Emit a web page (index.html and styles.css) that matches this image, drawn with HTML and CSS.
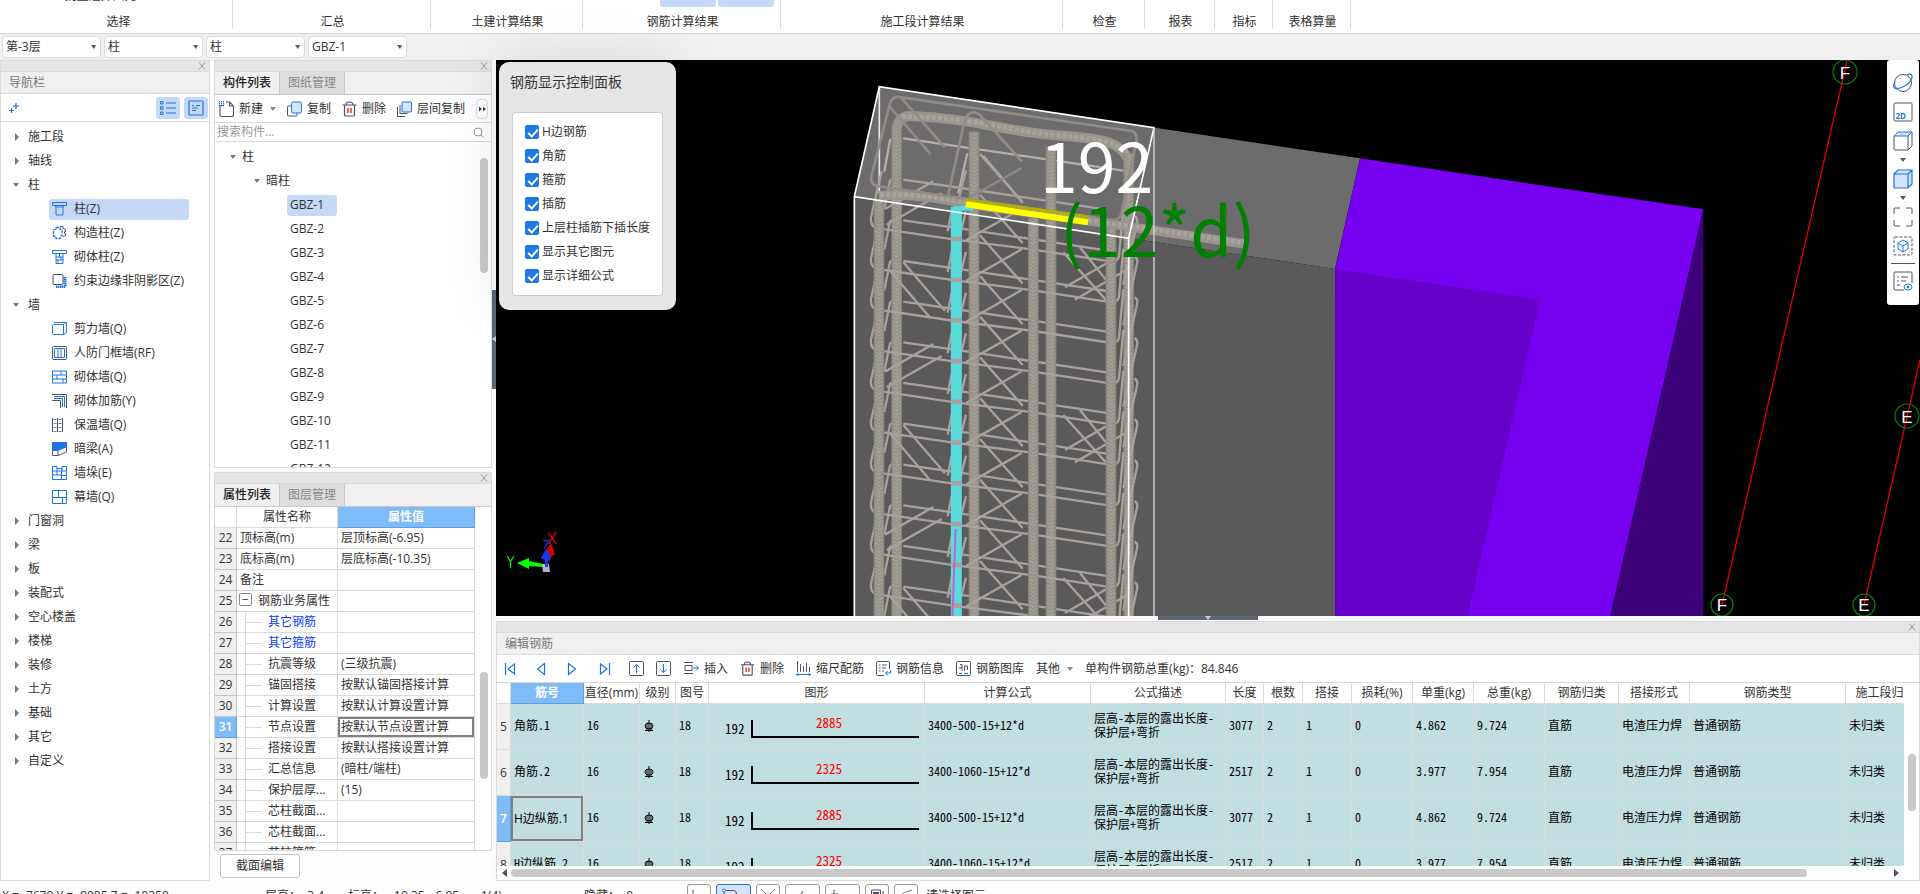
FILE: index.html
```html
<!DOCTYPE html>
<html lang="zh-CN">
<head>
<meta charset="utf-8">
<title>编辑钢筋</title>
<link rel="stylesheet" href="styles.css">
</head>
<body>
<svg class="defs" aria-hidden="true">
  <defs>
    <symbol id="i-close" viewBox="0 0 8 8"><path d="M1 0.5L7 7.5M7 0.5L1 7.5" stroke="#9a9a9a" fill="none"/></symbol>
    <symbol id="i-copy" viewBox="0 0 15 16"><path d="M4.500 5H1.500Q.5 5 .5 6V14Q.5 15 1.500 15H9Q10 15 10 14V12" fill="none" stroke="#4a5568"/><rect x="4.500" y="1" width="10" height="11" rx="1.500" fill="#d3e5fb" stroke="#1f74e4"/></symbol>
    <symbol id="i-trash" viewBox="0 0 15 16"><path d="M.5 4H14.500M4 4Q4 1 7.500 1T11 4M2.500 4V14Q2.500 15 3.500 15H11.500Q12.500 15 12.500 14V4" fill="none" stroke="#4a5568" stroke-width="1.200"/><path d="M6 7V12M9 7V12" stroke="#d80000" stroke-width="1.200"/></symbol>
    <pattern id="rib" width="32" height="22" patternUnits="userSpaceOnUse">
      <rect width="32" height="22" fill="#98948b"/>
      <path d="M4 4L16 12L28 4M4 15L16 23L28 15M4 -7L16 1L28 -7" stroke="#a5a299" stroke-width="4" fill="none"/>
      <path d="M5 10L13 15M27 10L19 15M5 21L13 26M27 21L19 26M5 -1L13 4M27 -1L19 4" stroke="#86837a" stroke-width="2" fill="none"/>
      <path d="M0 0V22M32 0V22" stroke="#807a70" stroke-width="7" opacity=".6"/>
    </pattern>
    <g id="back" fill="none" stroke="#aaa19d" stroke-width="7">
      <path d="M190 877L385 905L800 967M133 965L150 880L160 872M420 800L548 945M378 850L358 930"/>
    </g>
    <g id="front" fill="none" stroke="#aaa19d" stroke-width="7">
      <path d="M125 730L93 868Q90 898 115 901L345 935L580 965L815 1001Q838 1002 838 975L850 840M884 864Q896 870 890 890L850 1070M545 842L378 937M323 910L335 850"/>
    </g>
    <path id="cross-a" d="M190 1125L315 1270M150 1150L268 1288M670 1095L800 1240M720 1080L800 1180M800 1128L675 1200M855 1150L705 1237" fill="none" stroke="#aaa19d" stroke-width="7"/>
    <path id="cross-b" d="M280 882L135 965M305 918L140 1012" fill="none" stroke="#aaa19d" stroke-width="7"/>
  </defs>
</svg>
<div class="app">
  <header class="ribbon">
    <section class="group g1"><div class="cut">批量选择图元</div><h2>选择</h2></section>
    <section class="group g2"><h2>汇总</h2></section>
    <section class="group g3"><h2>土建计算结果</h2></section>
    <section class="group g4"><div class="pills"><i></i><i></i></div><h2>钢筋计算结果</h2></section>
    <section class="group g5"><h2>施工段计算结果</h2></section>
    <section class="group g6"><h2>检查</h2></section>
    <section class="group g7"><h2>报表</h2></section>
    <section class="group g8"><h2>指标</h2></section>
    <section class="group g9"><h2>表格算量</h2></section>
  </header>
  <div class="filters">
    <span class="drop"><select aria-label="楼层"><option>第-3层</option></select></span>
    <span class="drop"><select aria-label="构件大类"><option>柱</option></select></span>
    <span class="drop"><select aria-label="构件类型"><option>柱</option></select></span>
    <span class="drop"><select aria-label="构件"><option>GBZ-1</option></select></span>
  </div>
  <main class="main">
    <aside class="panel nav">
      <div class="strip"><button aria-label="关闭"><svg><use href="#i-close"/></svg></button></div>
      <h3 class="title">导航栏</h3>
      <div class="navbar">
        <button class="plus" aria-label="添加"><svg viewBox="0 0 10 12"><path d="M7 1V7M4 4H10M2.500 6V11M0 8.500H5" stroke="#1f74e4" fill="none" stroke-width="1.200"/></svg></button>
        <button class="tog" aria-label="列表"><svg viewBox="0 0 16 14"><path d="M.5 .5h2.500v2.500h-2.500zM.5 5.700h2.500v2.500h-2.500zM.5 11h2.500v2.500h-2.500zM6 2H16M6 7H16M6 12H16" stroke="#1f74e4" fill="none"/></svg></button>
        <button class="tog" aria-label="详情"><svg viewBox="0 0 16 16"><path d="M2 1H14Q15 1 15 2V14Q15 15 14 15H2Q1 15 1 14V2Q1 1 2 1zM4 5.500H6M8 5.500H12M4 8H10M4 10.500H8" stroke="#1f74e4" fill="none" stroke-width="1.200"/></svg></button>
      </div>
      <ul class="tree">
        <li class="shut">施工段</li><li class="shut">轴线</li><li class="open">柱</li>
        <li class="leaf"><button class="on"><svg viewBox="0 0 15 14"><path d="M.5 .5h14v3h-2l-1.500 1.500v8h-7v-8L2.500 3.500h-2zM2.500 3.500h10M4 5h7" stroke="#1f74e4" fill="none"/></svg>柱(Z)</button></li>
        <li class="leaf"><button><svg viewBox="0 0 15 14"><path d="M4 1.500h4v2l2 1v5l-2 1v2H4v-2L1.500 10V4L4 3z" stroke="#1f74e4" fill="none" stroke-dasharray="3 1" stroke-width="1.300"/><path d="M8 .5h3v2l2.500 1v2h-1v2h1v2L11 10.500" stroke="#4a5568" fill="none"/></svg>构造柱(Z)</button></li>
        <li class="leaf"><button><svg viewBox="0 0 15 14"><path d="M.5 .5h14v3H.5zM4 3.500V13.500H11V3.500M4 7H11M4 10H11M7.500 4V7M9 7V10M6 10V13" stroke="#1f74e4" fill="none"/></svg>砌体柱(Z)</button></li>
        <li class="leaf"><button><svg viewBox="0 0 15 14"><path d="M13 3v10H4" stroke="#1f74e4" stroke-width="3" stroke-dasharray="1.500 .5" fill="none"/><rect x="1" y=".5" width="10" height="10" rx="1" stroke="#4a5568" fill="#fff"/></svg>约束边缘非阴影区(Z)</button></li>
        <li class="open">墙</li>
        <li class="leaf"><button><svg viewBox="0 0 15 14"><path d="M.5 3.500Q.5 2.500 1.500 2.500H11.500V12.500H1.500Q.5 12.500 .5 11.500zM2 .5H14.500V10.500L12 12.500M12 2.500L14 .5" stroke="#1f74e4" fill="none"/></svg>剪力墙(Q)</button></li>
        <li class="leaf"><button><svg viewBox="0 0 15 14"><rect x=".5" y=".5" width="14" height="13" rx="1" stroke="#4a5568" fill="none"/><path d="M2.500 2.500h10v9h-10zM6 2.500V11.500M9 2.500V11.500" stroke="#1f74e4" fill="none"/></svg>人防门框墙(RF)</button></li>
        <li class="leaf"><button><svg viewBox="0 0 15 14"><path d="M.5 1h14v12H.5zM.5 5h14M.5 9h14M9 1V5M5 5V9M11 9V13" stroke="#1f74e4" fill="none"/></svg>砌体墙(Q)</button></li>
        <li class="leaf"><button><svg viewBox="0 0 15 14"><path d="M0 .5H14.500V14M0 6.500H8.500V14" stroke="#4a5568" fill="none"/><path d="M2 2.500H12.500V13M2 4.500H10.500V13" stroke="#1f74e4" fill="none"/></svg>砌体加筋(Y)</button></li>
        <li class="leaf"><button><svg viewBox="0 0 15 14"><path d="M.5 0V14M5.500 0V14M10.500 0V14" stroke="#4a5568"/><path d="M3 1V14M8 1V14" stroke="#4a5568" stroke-width="3" stroke-dasharray="1 3" opacity=".7"/></svg>保温墙(Q)</button></li>
        <li class="leaf"><button><svg viewBox="0 0 15 14"><path d="M0 0H15V5L6 9H0z" fill="#1f74e4"/><path d="M.5 9V13.500H6L14.500 10V5M6 9V13" stroke="#4a5568" fill="none"/></svg>暗梁(A)</button></li>
        <li class="leaf"><button><svg viewBox="0 0 15 14"><path d="M.5 .5H5v2h5v-2h4.500v13H.5zM.5 5h14M.5 9h9M5 2V9M10 2V5M9.500 5V13.500M9.500 9.500h5" stroke="#1f74e4" fill="none"/></svg>墙垛(E)</button></li>
        <li class="leaf"><button><svg viewBox="0 0 15 14"><path d="M.5 .5h14v13H.5zM.5 7.500h14M6.500 .5V7.500M10.500 7.500V13.500" stroke="#1f74e4" fill="none"/></svg>幕墙(Q)</button></li>
        <li class="shut">门窗洞</li><li class="shut">梁</li><li class="shut">板</li><li class="shut">装配式</li><li class="shut">空心楼盖</li><li class="shut">楼梯</li><li class="shut">装修</li><li class="shut">土方</li><li class="shut">基础</li><li class="shut">其它</li><li class="shut">自定义</li>
      </ul>
    </aside>

    <div class="mid">
      <section class="panel comps">
        <div class="strip"><button aria-label="关闭"><svg><use href="#i-close"/></svg></button></div>
        <div class="tabs"><button class="cur">构件列表</button><button>图纸管理</button></div>
        <div class="tools">
          <button><svg viewBox="0 0 15 16"><path d="M5 4.500H1V14Q1 15.500 2.500 15.500H13Q14.500 15.500 14.500 14V5L10.500 1H7M10.500 1V5H14.500" fill="none" stroke="#4a5568" stroke-width="1.100"/><path d="M0 .5h5M0 2.500h5M0 4.500h5" stroke="#1f74e4" stroke-dasharray="1 1" stroke-width="1.500"/></svg>新建<i class="tri"></i></button>
          <button><svg><use href="#i-copy"/></svg>复制</button>
          <button><svg><use href="#i-trash"/></svg>删除</button>
          <button><svg viewBox="0 0 15 16"><path d="M3 4V12.500H10.500M.5 6V15.500H8" fill="none" stroke="#4a5568"/><rect x="5" y="1" width="9.500" height="10" rx="1" fill="#d3e5fb" stroke="#1f74e4"/></svg>层间复制</button>
          <button class="more" aria-label="更多"><svg viewBox="0 0 7 6"><path d="M0 .5L3 3L0 5.500zM4 .5L7 3L4 5.500z" fill="#3b4252"/></svg></button>
        </div>
        <div class="search"><input type="text" placeholder="搜索构件..." aria-label="搜索构件"><svg viewBox="0 0 11 11"><circle cx="5" cy="5" r="4" stroke="#999" fill="none"/><path d="M8 8L10.500 10.500" stroke="#999"/></svg></div>
        <div class="listbox">
          <ul class="ctree">
            <li class="l1">柱</li><li class="l2">暗柱</li>
            <li><button class="on">GBZ-1</button></li><li><button>GBZ-2</button></li><li><button>GBZ-3</button></li><li><button>GBZ-4</button></li><li><button>GBZ-5</button></li><li><button>GBZ-6</button></li><li><button>GBZ-7</button></li><li><button>GBZ-8</button></li><li><button>GBZ-9</button></li><li><button>GBZ-10</button></li><li><button>GBZ-11</button></li><li><button>GBZ-12</button></li>
          </ul>
          <div class="vbar b1"><i></i></div>
        </div>
      </section>
      <section class="props">
        <div class="panel pbox">
          <div class="strip"><button aria-label="关闭"><svg><use href="#i-close"/></svg></button></div>
          <div class="tabs"><button class="cur">属性列表</button><button>图层管理</button></div>
          <div class="listbox">
            <table class="ptable">
              <colgroup><col class="p0"><col class="p1"><col class="p2"></colgroup>
              <thead><tr><th></th><th>属性名称</th><th class="hot">属性值</th></tr></thead>
              <tbody>
                <tr><th>22</th><td>顶标高(m)</td><td>层顶标高(-6.95)</td></tr>
                <tr><th>23</th><td>底标高(m)</td><td>层底标高(-10.35)</td></tr>
                <tr><th>24</th><td>备注</td><td></td></tr>
                <tr><th>25</th><td class="par"><button aria-label="折叠">−</button>钢筋业务属性</td><td></td></tr>
                <tr><th>26</th><td class="sub"><a href="#">其它钢筋</a></td><td></td></tr>
                <tr><th>27</th><td class="sub"><a href="#">其它箍筋</a></td><td></td></tr>
                <tr><th>28</th><td class="sub">抗震等级</td><td>(三级抗震)</td></tr>
                <tr><th>29</th><td class="sub">锚固搭接</td><td>按默认锚固搭接计算</td></tr>
                <tr><th>30</th><td class="sub">计算设置</td><td>按默认计算设置计算</td></tr>
                <tr><th class="hot">31</th><td class="sub">节点设置</td><td class="sel">按默认节点设置计算</td></tr>
                <tr><th>32</th><td class="sub">搭接设置</td><td>按默认搭接设置计算</td></tr>
                <tr><th>33</th><td class="sub">汇总信息</td><td>(暗柱/端柱)</td></tr>
                <tr><th>34</th><td class="sub">保护层厚...</td><td>(15)</td></tr>
                <tr><th>35</th><td class="sub">芯柱截面...</td><td></td></tr>
                <tr><th>36</th><td class="sub">芯柱截面...</td><td></td></tr>
                <tr><th>37</th><td class="sub">芯柱箍筋</td><td></td></tr>
              </tbody>
            </table>
            <div class="vbar b2"><i></i></div>
          </div>
        </div>
        <div class="foot"><button>截面编辑</button></div>
      </section>
    </div>

    <div class="vsplit"><i></i></div>

    <div class="work">
      <div class="canvas">
        <svg class="scene" viewBox="496 60 1424 557" preserveAspectRatio="xMinYMin slice">
          <rect x="496" y="60" width="1424" height="557" fill="#000"/>
          <path d="M879.300 86.700L1360 158.300L1335 269L1128.700 238.300L854.300 196.700z" fill="#6c6c6c"/>
          <path d="M854.300 196.700L1128.700 238.300L1335.200 269V617H854.300z" fill="#5a5a5a"/>
          <path d="M1360 158.300L1703.300 209.300L1610 617H1335.200V269z" fill="#7800f0"/>
          <path d="M1335.200 269L1540 299.700L1467.400 617H1335.200z" fill="#6400c8"/>
          <path d="M1703.300 209.300V617H1610z" fill="#3c0078"/>
          <g transform="translate(840 50) scale(.3333)">
            <path d="M118 110V430" stroke="#e8e8e8" stroke-width="5"/>
            <path d="M190 265L850 362M133 365L150 270L185 262M430 318L548 458M382 310L355 430" fill="none" stroke="#b5aeab" stroke-width="7"/>
            <use href="#back" y="-488"/><use href="#back" y="-366"/><use href="#back" y="-244"/><use href="#back" y="-122"/><use href="#back"/><use href="#back" y="122"/><use href="#back" y="244"/><use href="#back" y="367"/><use href="#back" y="489"/><use href="#back" y="611"/><use href="#back" y="733"/>
            <path d="M170 250Q170 195 215 198C400 205 500 245 640 255S840 270 865 330" fill="none" stroke="#99958c" stroke-width="30"/>
            <path d="M185 200C400 200 520 245 640 255S820 268 860 310" fill="none" stroke="#a7a49b" stroke-width="14" stroke-dasharray="12 6"/>
            <g transform="translate(154 225)"><rect width="32" height="1480" fill="url(#rib)"/></g>
            <g transform="translate(386 245)"><rect width="32" height="1460" fill="url(#rib)"/></g>
            <g transform="translate(617 290)"><rect width="32" height="1410" fill="url(#rib)"/></g>
            <g transform="translate(850 310)"><rect width="32" height="1390" fill="url(#rib)"/></g>
            <use href="#front" y="-366"/><use href="#front" y="-244"/><use href="#front" y="-122"/><use href="#front"/><use href="#front" y="122"/><use href="#front" y="244"/><use href="#front" y="367"/><use href="#front" y="489"/><use href="#front" y="611"/><use href="#front" y="733"/>
            <path d="M545 354L385 445" stroke="#8f8783" stroke-width="7"/>
            <use href="#cross-a" y="-488"/><use href="#cross-a"/><use href="#cross-a" y="489"/>
            <use href="#cross-b" y="-488"/><use href="#cross-b"/><use href="#cross-b" y="489"/>
            <path d="M117 436C250 432 320 450 400 465L800 520L1212 582" fill="none" stroke="#99958c" stroke-width="28"/>
            <path d="M120 434C250 430 320 448 400 463L800 518L1210 578" fill="none" stroke="#a7a49b" stroke-width="14" stroke-dasharray="12 6"/>
            <path d="M1212 566V598" stroke="#aaa69c" stroke-width="5"/>
            <g transform="translate(101 450)"><rect width="32" height="1260" fill="url(#rib)"/></g>
            <g transform="translate(564 505)"><rect width="32" height="1200" fill="url(#rib)"/></g>
            <g transform="translate(797 535)"><rect width="32" height="1170" fill="url(#rib)"/></g>
            <path d="M150 160Q158 135 185 142L875 243Q895 250 888 280L845 490Q838 512 815 510L110 408Q88 400 95 375zM185 145L315 292M145 165L272 313M325 435L375 205Q395 175 420 195L546 334" fill="none" stroke="#958b86" stroke-width="8"/>
            <path d="M349 470V1705" stroke="#59dadb" stroke-width="33"/>
            <path d="M340 475H400" stroke="#59dadb" stroke-width="14"/>
            <path d="M349 560V1705" stroke="#aaa19d" stroke-width="30" stroke-dasharray="14 108.200"/>
            <path d="M347 1437L337 1705" stroke="#c85fd0" stroke-width="6"/>
            <path d="M378 450L746 500" stroke="#b8b000" stroke-width="9"/>
            <path d="M378 463L744 517" stroke="#ff0" stroke-width="18"/>
            <path d="M43 1705V440L118 110L942 233L866 565L43 440M866 565V1705M942 233L866 565" fill="none" stroke="#fff" stroke-width="5"/>
            <path d="M942 233V1705" stroke="#dcdcdc" stroke-width="4"/>
          </g>
          <text class="big" x="1040" y="193" fill="#fff">192</text>
          <text class="big" x="1060" y="257" fill="#008000">(12*d)</text>
          <g stroke="#e00000" stroke-width="1.300"><path d="M1847 61L1722 605M1920 360L1864 605"/></g>
          <g fill="none" stroke="#0a7a0a" stroke-width="1.200"><circle cx="1845" cy="72" r="12"/><circle cx="1907" cy="416" r="12"/><circle cx="1722" cy="605" r="11"/><circle cx="1864" cy="605" r="11"/></g>
          <g class="mark" fill="#fff" text-anchor="middle"><text x="1845" y="79">F</text><text x="1907" y="423">E</text><text x="1722" y="611">F</text><text x="1864" y="611">E</text></g>
          <path d="M517 563L529 558V561L543 564V567L529 566V569z" fill="#0f0"/>
          <path d="M542 564H549L550 572H543z" fill="#b8b8b8"/>
          <path d="M546 550L551 543L555 554L551 557L549 563z" fill="#d00000"/>
          <path d="M546 549L551 558L548 560V567H545V560L541 558z" fill="#1040ff"/>
          <path d="M543 540.500H549L544 549" fill="none" stroke="#1030f0" stroke-width="1.300"/>
          <path d="M549 533L556 544M556 532L549 544" stroke="#f00" stroke-width="1.300"/>
          <path d="M507 556L510.500 561.500L514 556M510.500 561.500V568" fill="none" stroke="#0f0" stroke-width="1.200"/>
        </svg>
        <section class="rebar">
          <h3>钢筋显示控制面板</h3>
          <div class="checks">
            <label><input type="checkbox" checked>H边钢筋</label>
            <label><input type="checkbox" checked>角筋</label>
            <label><input type="checkbox" checked>箍筋</label>
            <label><input type="checkbox" checked>插筋</label>
            <label><input type="checkbox" checked>上层柱插筋下插长度</label>
            <label><input type="checkbox" checked>显示其它图元</label>
            <label><input type="checkbox" checked>显示详细公式</label>
          </div>
        </section>
        <nav class="views">
          <button aria-label="动态观察"><svg viewBox="0 0 20 20"><circle cx="10" cy="10" r="8.500" stroke="#4a5568" fill="none"/><path d="M14 2C18 0 20 2 18.500 6C16 12 6 17 1.500 15Q-.5 13 2 9" stroke="#1f74e4" fill="none" stroke-width="1.200"/></svg></button>
          <button aria-label="2D"><svg viewBox="0 0 20 20"><rect x="1" y="1" width="18" height="18" rx="1" stroke="#4a5568" fill="none"/><text class="two" x="2.500" y="16.500" fill="#1f74e4">2D</text></svg></button>
          <button class="dd" aria-label="线框"><svg viewBox="0 0 20 20"><path d="M1 5L5 1H19L15 5z" fill="#d3e5fb" stroke="#1f74e4"/><path d="M1 5V18Q1 19 2 19H15L19 15V1M15 5V19" stroke="#4a5568" fill="none"/></svg></button>
          <button class="dd" aria-label="实体"><svg viewBox="0 0 20 20"><path d="M1 5L5 1H19V15L15 19H2Q1 19 1 18zM1 5H15M15 5L19 1M15 5V19" fill="#d3e5fb" stroke="#1f74e4" stroke-width="1.200"/></svg></button>
          <button aria-label="全屏"><svg viewBox="0 0 20 20"><path d="M7 1H2Q1 1 1 2V7M13 1H18Q19 1 19 2V7M7 19H2Q1 19 1 18V13M13 19H18Q19 19 19 18V13" stroke="#4a5568" fill="none"/></svg></button>
          <button aria-label="选择显示"><svg viewBox="0 0 20 20"><rect x="1" y="1" width="18" height="18" rx="1" stroke="#4a5568" fill="none" stroke-dasharray="3 1.500"/><path d="M10 4L15 7V13L10 16L5 13V7zM5 7L10 10L15 7M10 10V16" stroke="#1f74e4" fill="none"/></svg></button>
          <hr>
          <button aria-label="显示设置"><svg viewBox="0 0 20 20"><path d="M11 19H2Q1 19 1 18V2Q1 1 2 1H18Q19 1 19 2V12M4 6H6M8 6H15M4 10H6M8 10H13M4 14H7" stroke="#4a5568" fill="none"/><ellipse cx="15" cy="16" rx="4" ry="3" stroke="#1f74e4" fill="none"/><circle cx="15" cy="16" r="1.300" fill="#1f74e4"/></svg></button>
        </nav>
      </div>
      <div class="hsplit"><i></i></div>
      <section class="panel edit">
        <div class="strip"><button aria-label="关闭"><svg><use href="#i-close"/></svg></button></div>
        <h3 class="title">编辑钢筋</h3>
        <div class="ebar">
          <div class="steps">
            <button aria-label="第一条"><svg viewBox="0 0 16 16"><path d="M3.500 2V14M12.500 3L6 8L12.500 13z" fill="none" stroke="#1f74e4" stroke-width="1.200"/></svg></button>
            <button aria-label="上一条"><svg viewBox="0 0 16 16"><path d="M11.500 2.500L4.500 8L11.500 13.500z" fill="none" stroke="#1f74e4" stroke-width="1.200"/></svg></button>
            <button aria-label="下一条"><svg viewBox="0 0 16 16"><path d="M4.500 2.500L11.500 8L4.500 13.500z" fill="none" stroke="#1f74e4" stroke-width="1.200"/></svg></button>
            <button aria-label="最后一条"><svg viewBox="0 0 16 16"><path d="M14.500 2V14M5.500 3L12 8L5.500 13z" fill="none" stroke="#1f74e4" stroke-width="1.200"/></svg></button>
          </div>
          <button aria-label="上移"><svg viewBox="0 0 15 15"><rect x=".5" y=".5" width="14" height="14" rx="1" fill="none" stroke="#4a5568"/><path d="M7.500 12V3.500M4.500 6.500L7.500 3.500L10.500 6.500" fill="none" stroke="#1f74e4"/></svg></button>
          <button aria-label="下移"><svg viewBox="0 0 15 15"><rect x=".5" y=".5" width="14" height="14" rx="1" fill="none" stroke="#4a5568"/><path d="M7.500 3V11.500M4.500 8.500L7.500 11.500L10.500 8.500" fill="none" stroke="#1f74e4"/></svg></button>
          <button><svg viewBox="0 0 15 15"><path d="M0 1.500H9M0 12.500H9M1 4.500H8V9.500H1z" fill="none" stroke="#4a5568"/><path d="M9 7H14.500M12 4.500L14.500 7L12 9.500" fill="none" stroke="#1f74e4"/></svg>插入</button>
          <button><svg><use href="#i-trash"/></svg>删除</button>
          <button><svg viewBox="0 0 15 15"><path d="M1.500 0V11M4.500 3V11M7.500 5V11M10.500 2V11M13.500 6V11" stroke="#4a5568"/><path d="M0 13.500H15M2.500 12L.5 13.500L2.500 15M12.500 12L14.500 13.500L12.500 15" fill="none" stroke="#1f74e4"/></svg>缩尺配筋</button>
          <button><svg viewBox="0 0 15 15"><path d="M8 14.500H1.500Q.5 14.500 .5 13.500V1.500Q.5 .5 1.500 .5H12.500Q13.500 .5 13.500 1.500V8M3 4H4.500M6 4H11M3 7H4.500M6 7H10M3 10H4.500M6 10H8" stroke="#4a5568" fill="none"/><path d="M14.500 9V12H9.500M12 9.500L9.500 12L12 14.500" stroke="#1f74e4" fill="none"/></svg>钢筋信息</button>
          <button><svg viewBox="0 0 15 15"><rect x=".5" y=".5" width="14" height="14" rx="1" fill="none" stroke="#4a5568"/><path d="M3 7H6V3.500H4M6 7V10M8.500 10V5H11.500V9" stroke="#4a5568" fill="none"/><path d="M3 12.500H6M8 12.500H12" stroke="#1f74e4"/></svg>钢筋图库</button>
          <button>其他<i class="tri"></i></button>
          <span>单构件钢筋总重(kg)：84.846</span>
        </div>
        <div class="grid">
          <div class="gclip">
            <table class="gtable">
              <colgroup><col class="c0"><col class="c1"><col class="c2"><col class="c3"><col class="c4"><col class="c5"><col class="c6"><col class="c7"><col class="c8"><col class="c9"><col class="c10"><col class="c11"><col class="c12"><col class="c13"><col class="c14"><col class="c15"><col class="c16"><col class="c17"></colgroup>
              <thead><tr><th></th><th class="hot">筋号</th><th>直径(mm)</th><th>级别</th><th>图号</th><th>图形</th><th>计算公式</th><th>公式描述</th><th>长度</th><th>根数</th><th>搭接</th><th>损耗(%)</th><th>单重(kg)</th><th>总重(kg)</th><th>钢筋归类</th><th>搭接形式</th><th>钢筋类型</th><th>施工段归类</th></tr></thead>
              <tbody>
                <tr><th>5</th><td>角筋.1</td><td>16</td><td><svg class="grade" viewBox="0 0 10 12"><path d="M5 0V12M3 3V10M7 3V10M1 10.500H9" stroke="#000"/><ellipse cx="5" cy="6" rx="4" ry="3" fill="none" stroke="#000"/></svg></td><td>18</td><td class="fig"><svg viewBox="0 0 214 44"><text x="16" y="29">192</text><path d="M43 15V32H210" fill="none" stroke="#000" stroke-width="2"/><text class="len" x="120" y="23">2885</text></svg></td><td>3400-500-15+12*d</td><td>层高-本层的露出长度-<br>保护层+弯折</td><td>3077</td><td>2</td><td>1</td><td>0</td><td>4.862</td><td>9.724</td><td>直筋</td><td>电渣压力焊</td><td>普通钢筋</td><td>未归类</td></tr>
                <tr><th>6</th><td>角筋.2</td><td>16</td><td><svg class="grade" viewBox="0 0 10 12"><path d="M5 0V12M3 3V10M7 3V10M1 10.500H9" stroke="#000"/><ellipse cx="5" cy="6" rx="4" ry="3" fill="none" stroke="#000"/></svg></td><td>18</td><td class="fig"><svg viewBox="0 0 214 44"><text x="16" y="29">192</text><path d="M43 15V32H210" fill="none" stroke="#000" stroke-width="2"/><text class="len" x="120" y="23">2325</text></svg></td><td>3400-1060-15+12*d</td><td>层高-本层的露出长度-<br>保护层+弯折</td><td>2517</td><td>2</td><td>1</td><td>0</td><td>3.977</td><td>7.954</td><td>直筋</td><td>电渣压力焊</td><td>普通钢筋</td><td>未归类</td></tr>
                <tr><th class="hot">7</th><td class="sel">H边纵筋.1</td><td>16</td><td><svg class="grade" viewBox="0 0 10 12"><path d="M5 0V12M3 3V10M7 3V10M1 10.500H9" stroke="#000"/><ellipse cx="5" cy="6" rx="4" ry="3" fill="none" stroke="#000"/></svg></td><td>18</td><td class="fig"><svg viewBox="0 0 214 44"><text x="16" y="29">192</text><path d="M43 15V32H210" fill="none" stroke="#000" stroke-width="2"/><text class="len" x="120" y="23">2885</text></svg></td><td>3400-500-15+12*d</td><td>层高-本层的露出长度-<br>保护层+弯折</td><td>3077</td><td>2</td><td>1</td><td>0</td><td>4.862</td><td>9.724</td><td>直筋</td><td>电渣压力焊</td><td>普通钢筋</td><td>未归类</td></tr>
                <tr><th>8</th><td>H边纵筋.2</td><td>16</td><td><svg class="grade" viewBox="0 0 10 12"><path d="M5 0V12M3 3V10M7 3V10M1 10.500H9" stroke="#000"/><ellipse cx="5" cy="6" rx="4" ry="3" fill="none" stroke="#000"/></svg></td><td>18</td><td class="fig"><svg viewBox="0 0 214 44"><text x="16" y="29">192</text><path d="M43 15V32H210" fill="none" stroke="#000" stroke-width="2"/><text class="len" x="120" y="23">2325</text></svg></td><td>3400-1060-15+12*d</td><td>层高-本层的露出长度-<br>保护层+弯折</td><td>2517</td><td>2</td><td>1</td><td>0</td><td>3.977</td><td>7.954</td><td>直筋</td><td>电渣压力焊</td><td>普通钢筋</td><td>未归类</td></tr>
              </tbody>
            </table>
          </div>
          <div class="vbar b3"><i></i></div>
        </div>
        <div class="hbar"><b class="lt"></b><div class="track"><i></i></div><b class="rt"></b></div>
      </section>
    </div>
  </main>
  <footer class="status">
    <span class="s1">X = -7679 Y = -8085 Z = -10350</span>
    <span class="s2">层高：&nbsp; 3.4</span>
    <span class="s3">标高：&nbsp; -10.35~-6.95</span>
    <span class="s4">1(4)</span>
    <span class="s5">隐藏：&nbsp; 0</span>
    <div class="sbtns">
      <button aria-label="正交"><svg viewBox="0 0 16 16"><path d="M2 2V13H14" stroke="#4a5568" fill="none"/></svg></button>
      <button class="w on" aria-label="捕捉"><svg viewBox="0 0 16 16"><path d="M4 2.500H12Q14.500 2.500 14.500 6V12" stroke="#4a5568" fill="none"/><path d="M2 4V12" stroke="#1f74e4"/><circle cx="2" cy="2.500" r="1.500" stroke="#1f74e4" fill="#fff"/></svg></button>
      <button aria-label="交点"><svg viewBox="0 0 16 16"><path d="M1 1L15 15M15 1L1 15" stroke="#777"/></svg></button>
      <button class="w" aria-label="垂点"><svg viewBox="0 0 16 16"><path d="M12 3L5 13" stroke="#4a5568"/></svg></button>
      <button class="w" aria-label="中点"><svg viewBox="0 0 16 16"><path d="M3 2V12M0 6H7" stroke="#4a5568"/></svg></button>
      <button aria-label="端点"><svg viewBox="0 0 16 16"><path d="M2.500 2H11.500V14H2.500z" fill="#fff" stroke="#4a5568"/><path d="M4 4H10V14H4z" fill="#4a5568"/><path d="M14 3V14" stroke="#4a5568"/></svg></button>
      <button aria-label="延伸"><svg viewBox="0 0 16 16"><path d="M2 10C4 4 8 4 14 2" stroke="#777" fill="none"/></svg></button>
    </div>
    <span>请选择图元</span>
  </footer>
</div>
</body>
</html>
```
FILE: styles.css
```css
* { box-sizing: border-box; }
body { margin: 0; height: 100vh; overflow: hidden; background: #fdfdfd; color: #333; font: 12px/16px "Open Sans", "Noto Sans CJK SC", sans-serif; }
button, input, select { font: inherit; color: inherit; margin: 0; padding: 0; border: 0; background: none; }
h2, h3 { margin: 0; font-size: inherit; font-weight: 400; }
ul { list-style: none; margin: 0; padding: 0; }
.defs { position: absolute; width: 0; height: 0; }
.app { display: flex; flex-direction: column; height: calc(100vh + 17px); }

.ribbon { display: flex; height: 34px; background: #fff; border-bottom: 1px solid #d6d6d6; padding-bottom: 4px; overflow: hidden; }
.group { display: flex; flex-direction: column; align-items: center; justify-content: flex-end; border-right: 1px solid #dcdcdc; padding-left: 2px; }
.group h2 { line-height: 14px; }
.cut { display: flex; align-items: flex-end; height: 3px; margin-bottom: auto; white-space: nowrap; overflow: hidden; line-height: 14px; padding-right: 36px; }
.pills { display: flex; gap: 2px; margin: 0 0 auto 68px; }
.pills i { width: 56px; height: 7px; background: #c4d9f5; border-radius: 0 0 3px 3px; }
.g1 { width: 233px; padding-left: 5px; } .g2 { width: 198px; } .g3 { width: 152px; } .g4 { width: 198px; }
.g5 { width: 282px; } .g6 { width: 82px; } .g7 { width: 70px; } .g8 { width: 58px; } .g9 { width: 78px; }

.filters { display: flex; gap: 3px; padding: 1px 2px; height: 26px; background: #f0f0f0; align-items: center; }
.drop { position: relative; width: 99px; height: 22px; }
.drop select { appearance: none; width: 100%; height: 100%; background: #fff; border: 1px solid #dcdcdc; border-radius: 4px; padding-left: 3px; }
.drop::after { content: ""; position: absolute; right: 5px; top: 9px; border: 2px solid transparent; border-top: 4px solid #555; border-bottom: 0; border-left-width: 3px; pointer-events: none; }

.main { flex: 1; min-height: 0; display: flex; }
.panel { border: 1px solid #dadada; border-top: 0; background: #fff; display: flex; flex-direction: column; min-height: 0; }
.strip { flex: none; height: 12px; background: #e5e5e5; border-top: 1px solid #dadada; border-bottom: 1px solid #dadada; display: flex; justify-content: flex-end; align-items: center; padding-right: 3px; }
.strip button { display: flex; }
.strip svg { width: 8px; height: 8px; }
.title { flex: none; height: 22px; line-height: 21px; background: #f0f0f0; border-bottom: 1px solid #dadada; padding-left: 8px; color: #777; }

.nav { width: 210px; margin-right: 4px; }
.navbar { flex: none; display: flex; align-items: center; gap: 4px; height: 28px; padding: 0 1px 0 8px; border-bottom: 1px solid #dadada; }
.plus { margin-right: auto; display: flex; }
.plus svg { width: 10px; height: 12px; }
.tog { width: 24px; height: 22px; background: #c4d9f5; border-radius: 3px; display: flex; align-items: center; justify-content: center; }
.tog svg { width: 16px; height: 16px; }
.tree { padding-top: 3px; }
.tree li { height: 24px; line-height: 24px; display: flex; align-items: center; }
.tree .shut, .tree .open { padding-left: 14px; gap: 9px; }
.tree .shut::before { content: ""; border: 4px solid transparent; border-left: 4px solid #777; border-right: 0; }
.tree .open { padding-left: 12px; }
.tree .open::before, .l1::before, .l2::before { content: ""; border: 3px solid transparent; border-top: 4px solid #777; border-bottom: 0; }
.tree .leaf { padding-left: 48px; }
.leaf button { display: flex; align-items: center; gap: 7px; height: 21px; min-width: 140px; padding-left: 3px; border-radius: 3px; white-space: nowrap; }
.leaf svg { width: 15px; height: 14px; }
.on { background: #c4d9f5; }

.mid { width: 278px; display: flex; flex-direction: column; gap: 4px; }
.comps { flex: 407 1 0; }
.props { flex: 410 1 0; min-height: 0; display: flex; flex-direction: column; }
.pbox { flex: 1; }
.foot { flex: none; padding: 3px 6px; height: 30px; }
.foot button { width: 80px; height: 24px; background: #fff; border: 1px solid #c4c4c4; border-radius: 3px; }
.tabs { flex: none; display: flex; height: 23px; background: #f0f0f0; border-bottom: 1px solid #c8c8c8; }
.tabs button { width: 65px; border-right: 1px solid #c8c8c8; color: #888; background: #dedede; }
.tabs .cur { color: #222; background: #f0f0f0; font-weight: 500; }
.tools { flex: none; display: flex; align-items: center; gap: 11px; height: 28px; padding-left: 4px; border-bottom: 1px solid #dadada; }
.tools button, .ebar button { display: flex; align-items: center; gap: 5px; white-space: nowrap; }
.tools svg { width: 15px; height: 16px; }
.tri { border: 3px solid transparent; border-top: 4px solid #888; border-bottom: 0; margin-left: 2px; }
.tools .more { width: 12px; height: 20px; border: 1px solid #ddd; border-radius: 4px; justify-content: center; }
.tools .more svg { width: 7px; height: 6px; flex: none; }
.search { flex: none; display: flex; align-items: center; height: 19px; border-bottom: 1px solid #dadada; padding: 0 7px 0 2px; }
.search input { flex: 1; min-width: 0; outline: 0; }
.search input::placeholder { color: #999; }
.search svg { width: 11px; height: 11px; }
.listbox { flex: 1; min-height: 0; display: flex; justify-content: space-between; overflow: hidden; }
.ctree { padding-top: 3px; }
.ctree li { height: 24px; display: flex; align-items: center; gap: 6px; padding-left: 72px; }
.ctree .l1 { padding-left: 15px; }
.ctree .l2 { padding-left: 39px; }
.ctree button { height: 21px; min-width: 50px; padding: 0 3px; text-align: left; border-radius: 3px; }
.vbar { flex: none; width: 14px; padding-left: 3px; }
.vbar i { display: block; width: 8px; border-radius: 4px; background: #c9c9c9; }
.b1 i { margin-top: 16px; height: 115px; }
.b2 i { margin-top: 165px; height: 107px; }
.b3 i { margin-top: 71px; height: 57px; }

table { border-collapse: separate; border-spacing: 0; table-layout: fixed; }
.ptable { width: 260px; flex: none; align-self: flex-start; }
.p0 { width: 22px; } .p1 { width: 101px; } .p2 { width: 137px; }
.ptable th, .ptable td { height: 21px; padding: 0 3px; line-height: 16px; border-right: 1px solid #dadada; border-bottom: 1px solid #dadada; font-weight: 400; white-space: nowrap; overflow: hidden; text-align: left; }
.ptable thead th { text-align: center; }
.ptable tbody th { background: #f0f0f0; text-align: center; padding: 0; border-color: #c4c4c4; }
.ptable .hot, .gtable .hot, .ptable tbody .hot, .gtable tbody .hot { background: #7fbaf9; color: #fff; font-weight: 600; border-color: #5b9fe6; }
.ptable .sel { box-shadow: inset 0 0 0 2px #808080; }
.ptable .par button { width: 13px; height: 13px; line-height: 11px; border: 1px solid #888; border-radius: 2px; margin-right: 6px; vertical-align: 1px; }
.ptable .par { padding-left: 2px; }
.ptable .sub { padding: 0 0 0 31px; background: linear-gradient(#dadada, #dadada) 8px 0 / 1px 100% no-repeat, linear-gradient(#dadada, #dadada) 9px 10px / 16px 1px no-repeat; }
.ptable a { color: #0a3cff; text-decoration: none; }

.vsplit { width: 4px; background: #fafafa; display: flex; align-items: center; }
.vsplit i { width: 4px; height: 99px; background: #5b6676; margin-bottom: 263px; display: flex; align-items: center; }
.vsplit i::before { content: ""; border: 3px solid transparent; border-right: 4px solid #c8ccd2; border-left: 0; }
.work { flex: 1; min-width: 0; display: flex; flex-direction: column; }
.canvas { position: relative; flex: 557 1 0; min-height: 0; background: #000; }
.scene { display: block; width: 100%; height: 100%; }
.big { font: 68px "Noto Sans CJK SC", sans-serif; }
.mark { font: 17px "Liberation Sans", sans-serif; }
.two { font: 700 8px "Open Sans", sans-serif; }
.rebar { position: absolute; z-index: 2; left: 3px; top: 2px; width: 177px; padding: 11px 13px 14px; background: #e6e6e6; border-radius: 10px; box-shadow: 0 0 60px rgba(0,0,0,.1); }
.rebar h3 { font-size: 14px; line-height: 18px; margin: 0 0 21px -2px; }
.checks { background: #fff; border: 1px solid #cfcfcf; border-radius: 3px; padding: 7px 12px; }
.checks label { display: flex; align-items: center; gap: 3px; height: 24px; white-space: nowrap; }
.checks input { appearance: none; flex: none; position: relative; width: 14px; height: 14px; border-radius: 2px; background: #1f78e8; }
.checks input:checked::after { content: ""; position: absolute; left: 5px; top: 2px; width: 4px; height: 8px; border: solid #fff; border-width: 0 2px 2px 0; rotate: 42deg; }
.views { position: absolute; right: 1px; top: 0; width: 32px; padding: 13px 0 14px; background: #fff; border-radius: 3px; display: flex; flex-direction: column; align-items: center; gap: 9px; }
.views button { display: flex; flex-direction: column; align-items: center; }
.views svg { width: 20px; height: 20px; }
.views .dd::after { content: ""; border: 3px solid transparent; border-top: 4px solid #4a5568; border-bottom: 0; margin: 7px 0 -2px; }
.views hr { width: 24px; height: 1px; border: 0; background: #4a5568; margin: -2px 0; }
.hsplit { flex: none; height: 5px; background: #fdfdfd; display: flex; justify-content: center; }
.hsplit i { width: 100px; height: 4px; background: #5b6676; display: flex; justify-content: center; }
.hsplit i::before { content: ""; border: 3px solid transparent; border-top: 4px solid #c8ccd2; border-bottom: 0; }

.edit { flex: 259 1 0; }
.ebar { flex: none; display: flex; align-items: center; gap: 12px; height: 28px; padding-left: 5px; border-bottom: 1px solid #dadada; }
.ebar svg { width: 15px; height: 15px; }
.steps { display: flex; gap: 15px; margin-right: 6px; }
.steps svg { width: 16px; height: 16px; }
.steps + button + button + button { margin-left: 1px; }
.grid { flex: 1; min-height: 0; display: flex; overflow: hidden; }
.gclip { flex: 1; min-width: 0; overflow: hidden; margin-right: 1px; }
.gtable { width: 1429px; }
.c0 { width: 14px; } .c1 { width: 73px; } .c2 { width: 56px; } .c3 { width: 36px; } .c4 { width: 33px; } .c5 { width: 216px; } .c6 { width: 166px; } .c7 { width: 135px; } .c8 { width: 38px; } .c9 { width: 39px; } .c10 { width: 49px; } .c11 { width: 61px; } .c12 { width: 61px; } .c13 { width: 71px; } .c14 { width: 74px; } .c15 { width: 71px; } .c16 { width: 156px; } .c17 { width: 80px; }
.gtable th, .gtable td { border-right: 1px solid #dadada; border-bottom: 1px solid #dadada; font-weight: 400; padding: 0; }
.gtable thead th { height: 21px; line-height: 16px; white-space: nowrap; }
.gtable tbody th { background: #f0f0f0; }
.gtable td { height: 46px; background: #c1dee1; color: #000; padding: 0 0 4px 3px; line-height: 14px; font-family: "Noto Sans Mono CJK SC", "Noto Sans CJK SC", monospace; white-space: nowrap; }
.gtable td.sel { font-family: "Open Sans", "Noto Sans CJK SC", sans-serif; box-shadow: inset 0 0 0 2px #808080; padding-bottom: 0; }
.grade { display: block; width: 10px; height: 12px; margin: 2px 0 0 1px; }
.gtable td.fig { padding: 0; }
.fig svg { display: block; width: 214px; height: 44px; }
.fig text { font-size: 13px; }
.fig .len { fill: #f00; text-anchor: middle; }
.hbar { flex: none; height: 14px; display: flex; align-items: center; gap: 4px; padding: 0 20px 0 5px; }
.hbar b { border: 4px solid transparent; }
.hbar .lt { border-right: 5px solid #4a5568; border-left: 0; }
.hbar .rt { border-left: 5px solid #4a5568; border-right: 0; }
.track { flex: 1; }
.track i { display: block; width: 94%; height: 8px; border-radius: 4px; background: #c9c9c9; }

.status { flex: none; height: 30px; display: flex; align-items: center; padding: 0 2px; white-space: nowrap; }
.s1 { width: 263px; } .s2 { width: 83px; } .s3 { width: 133px; } .s4 { width: 103px; } .s5 { width: 103px; }
.sbtns { display: flex; gap: 5px; margin-right: 8px; }
.sbtns button { width: 24px; height: 24px; border: 1px solid #999; border-radius: 3px; display: flex; align-items: center; justify-content: center; }
.sbtns .w { width: 35px; justify-content: flex-start; padding-left: 5px; }
.sbtns .on { border-color: #1f74e4; background: #d3e5fb; }
.sbtns svg { width: 16px; height: 16px; }
```
